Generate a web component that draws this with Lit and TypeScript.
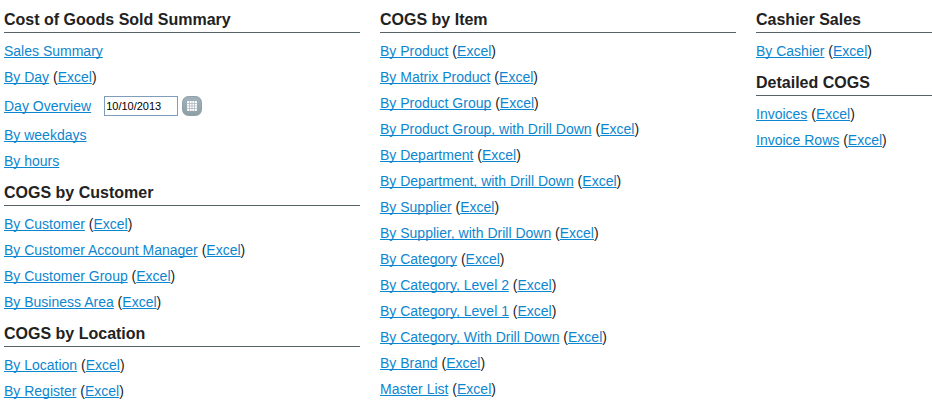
import { LitElement, html, css, nothing } from "lit";
import { customElement, property, state } from "lit/decorators.js";

interface Report {
  label: string;
  excel?: boolean;
  dated?: boolean;
}

interface Section {
  title: string;
  reports: Report[];
}

const plain = (label: string): Report => ({ label });
const withExcel = (label: string): Report => ({ label, excel: true });

const COLUMNS: Section[][] = [
  [
    {
      title: "Cost of Goods Sold Summary",
      reports: [
        plain("Sales Summary"),
        withExcel("By Day"),
        { label: "Day Overview", dated: true },
        plain("By weekdays"),
        plain("By hours"),
      ],
    },
    {
      title: "COGS by Customer",
      reports: [
        "By Customer",
        "By Customer Account Manager",
        "By Customer Group",
        "By Business Area",
      ].map(withExcel),
    },
    {
      title: "COGS by Location",
      reports: ["By Location", "By Register"].map(withExcel),
    },
  ],
  [
    {
      title: "COGS by Item",
      reports: [
        "By Product",
        "By Matrix Product",
        "By Product Group",
        "By Product Group, with Drill Down",
        "By Department",
        "By Department, with Drill Down",
        "By Supplier",
        "By Supplier, with Drill Down",
        "By Category",
        "By Category, Level 2",
        "By Category, Level 1",
        "By Category, With Drill Down",
        "By Brand",
        "Master List",
      ].map(withExcel),
    },
  ],
  [
    { title: "Cashier Sales", reports: [withExcel("By Cashier")] },
    {
      title: "Detailed COGS",
      reports: ["Invoices", "Invoice Rows"].map(withExcel),
    },
  ],
];

@customElement("date-field")
export class DateField extends LitElement {
  @property() value = "";
  @property() label = "";

  static styles = css`
    :host {
      display: flex;
      align-items: center;
      gap: 4px;
    }
    .input {
      box-sizing: border-box;
      width: 74px;
      height: 20px;
      margin: 0;
      padding: 0 1px;
      border: 1px solid #7f9db9;
      border-radius: 0;
      background: #fff;
      color: #000;
      font: 11px "Liberation Sans", Arial, sans-serif;
    }
    .button {
      display: block;
      width: 20px;
      height: 20px;
      margin: 0;
      padding: 0;
      border: 0;
      background: none;
      cursor: pointer;
    }
    .icon {
      display: block;
    }
  `;

  render() {
    return html`
      <input
        class="input"
        type="text"
        aria-label=${this.label}
        .value=${this.value}
      />
      <button class="button" type="button" aria-label="Choose date">
        <svg class="icon" width="20" height="20" viewBox="0 0 20 20" aria-hidden="true">
          <defs>
            <linearGradient id="face" x1="0" y1="0" x2="0" y2="1">
              <stop offset="0" stop-color="#a3b2ba" />
              <stop offset="1" stop-color="#8d9ea7" />
            </linearGradient>
          </defs>
          <rect width="20" height="20" rx="6.5" fill="#8fa0a9" />
          <rect x="1" y="1" width="18" height="18" rx="5.5" fill="url(#face)" />
          <rect x="5" y="5" width="10" height="10" rx="1" fill="#fff" />
          <path
            d="M5 7.5H15M5 10H15M5 12.5H15M7.5 5V15M10 5V15M12.5 5V15"
            stroke="#97a6af"
            stroke-width="0.6"
          />
        </svg>
      </button>
    `;
  }
}

@customElement("app-root")
export class AppRoot extends LitElement {
  @state() private date = "10/10/2013";

  static styles = css`
    :host {
      display: block;
      color: #222;
      background: #fff;
      font: 14px/26px "Liberation Sans", Helvetica, Arial, sans-serif;
    }
    .columns {
      display: grid;
      grid-template-columns: 89fr 89fr 44fr;
      gap: 20px;
      padding: 1px 0 0 4px;
    }
    .title {
      margin: 0 0 5px;
      padding-top: 7px;
      border-bottom: 1px solid #56636b;
      font-size: 16px;
      line-height: 24px;
      font-weight: bold;
      white-space: nowrap;
    }
    .reports {
      margin: 0;
      padding: 0;
      list-style: none;
    }
    .report {
      white-space: nowrap;
    }
    .dated {
      display: flex;
      align-items: center;
      gap: 13px;
      height: 32px;
    }
    .link {
      color: #0d86d0;
      text-decoration: underline;
      text-decoration-thickness: 1px;
      text-underline-offset: 1px;
      text-decoration-skip-ink: none;
    }
  `;

  private renderReport(report: Report) {
    return html`<li class="report ${report.dated ? "dated" : ""}"><a class="link" href="#">${report.label}</a>${report.excel
        ? html` (<a class="link" href="#">Excel</a>)`
        : nothing}${report.dated
        ? html`<date-field label="Overview date" .value=${this.date}></date-field>`
        : nothing}</li>`;
  }

  render() {
    return html`
      <main class="columns">
        ${COLUMNS.map(
          (sections) => html`
            <div>
              ${sections.map(
                (section) => html`
                  <section>
                    <h2 class="title">${section.title}</h2>
                    <ul class="reports">
                      ${section.reports.map((report) => this.renderReport(report))}
                    </ul>
                  </section>
                `
              )}
            </div>
          `
        )}
      </main>
    `;
  }
}
